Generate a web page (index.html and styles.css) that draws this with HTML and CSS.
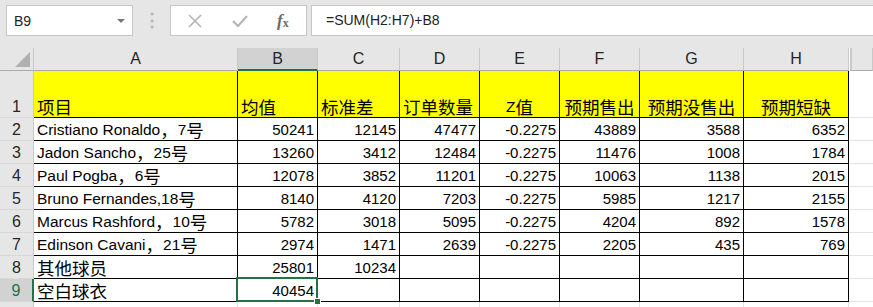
FILE: index.html
```html
<!DOCTYPE html>
<html>
<head>
	<meta charset="utf-8">
	<title>Sheet</title>
	<link rel="stylesheet" href="styles.css">
</head>
<body>
	<div class="toolbar">
		<div class="namebox">
			<span>B9</span>
			<span class="drop"></span>
		</div>
		<div class="grip">⋮</div>
		<div class="btns">
			<svg class="ico" width="16" height="16" viewBox="0 0 16 16"><path d="M2 2 L14 14 M14 2 L2 14" stroke="#b4b4b4" stroke-width="1.6" fill="none"/></svg>
			<svg class="ico" width="18" height="16" viewBox="0 0 18 16"><path d="M2 8 L7 13 L16 3" stroke="#b4b4b4" stroke-width="2" fill="none"/></svg>
			<span class="fx"><i>f</i><sub>x</sub></span>
		</div>
		<div class="formula">=SUM(H2:H7)+B8</div>
	</div>

	<div class="sheet">
		<!-- column headers -->
		<div class="corner"><span class="tri"></span></div>
		<div class="ch">A</div>
		<div class="ch sel">B</div>
		<div class="ch">C</div>
		<div class="ch">D</div>
		<div class="ch">E</div>
		<div class="ch">F</div>
		<div class="ch">G</div>
		<div class="ch">H</div>
		<div class="ch end"></div>

		<!-- row 1 -->
		<div class="rh tall">1</div>
		<div class="c y"><span class="zh">项目</span></div>
		<div class="c y"><span class="zh">均值</span></div>
		<div class="c y"><span class="zh">标准差</span></div>
		<div class="c y"><span class="zh">订单数量</span></div>
		<div class="c y m">Z<span class="zh">值</span></div>
		<div class="c y m"><span class="zh">预期售出</span></div>
		<div class="c y m"><span class="zh">预期没售出</span></div>
		<div class="c y m"><span class="zh">预期短缺</span></div>
		<div class="e"></div>

		<div class="rh">2</div>
		<div class="c">Cristiano Ronaldo<span class="zh">，</span>7<span class="zh">号</span></div>
		<div class="c n">50241</div>
		<div class="c n">12145</div>
		<div class="c n">47477</div>
		<div class="c n">-0.2275</div>
		<div class="c n">43889</div>
		<div class="c n">3588</div>
		<div class="c n">6352</div>
		<div class="e"></div>

		<div class="rh">3</div>
		<div class="c">Jadon Sancho<span class="zh">，</span>25<span class="zh">号</span></div>
		<div class="c n">13260</div>
		<div class="c n">3412</div>
		<div class="c n">12484</div>
		<div class="c n">-0.2275</div>
		<div class="c n">11476</div>
		<div class="c n">1008</div>
		<div class="c n">1784</div>
		<div class="e"></div>

		<div class="rh">4</div>
		<div class="c">Paul Pogba<span class="zh">，</span>6<span class="zh">号</span></div>
		<div class="c n">12078</div>
		<div class="c n">3852</div>
		<div class="c n">11201</div>
		<div class="c n">-0.2275</div>
		<div class="c n">10063</div>
		<div class="c n">1138</div>
		<div class="c n">2015</div>
		<div class="e"></div>

		<div class="rh">5</div>
		<div class="c">Bruno Fernandes,18<span class="zh">号</span></div>
		<div class="c n">8140</div>
		<div class="c n">4120</div>
		<div class="c n">7203</div>
		<div class="c n">-0.2275</div>
		<div class="c n">5985</div>
		<div class="c n">1217</div>
		<div class="c n">2155</div>
		<div class="e"></div>

		<div class="rh">6</div>
		<div class="c">Marcus Rashford<span class="zh">，</span>10<span class="zh">号</span></div>
		<div class="c n">5782</div>
		<div class="c n">3018</div>
		<div class="c n">5095</div>
		<div class="c n">-0.2275</div>
		<div class="c n">4204</div>
		<div class="c n">892</div>
		<div class="c n">1578</div>
		<div class="e"></div>

		<div class="rh">7</div>
		<div class="c">Edinson Cavani<span class="zh">，</span>21<span class="zh">号</span></div>
		<div class="c n">2974</div>
		<div class="c n">1471</div>
		<div class="c n">2639</div>
		<div class="c n">-0.2275</div>
		<div class="c n">2205</div>
		<div class="c n">435</div>
		<div class="c n">769</div>
		<div class="e"></div>

		<div class="rh">8</div>
		<div class="c"><span class="zh">其他球员</span></div>
		<div class="c n">25801</div>
		<div class="c n">10234</div>
		<div class="c"></div>
		<div class="c"></div>
		<div class="c"></div>
		<div class="c"></div>
		<div class="c"></div>
		<div class="e"></div>

		<div class="rh sel">9</div>
		<div class="c"><span class="zh">空白球衣</span></div>
		<div class="c n active">40454<span class="handle"></span></div>
		<div class="c"></div>
		<div class="c"></div>
		<div class="c"></div>
		<div class="c"></div>
		<div class="c"></div>
		<div class="c"></div>
		<div class="e"></div>

		<!-- row 10, only its top edge shows -->
		<div class="rh"></div>
		<div class="g"></div>
		<div class="g"></div>
		<div class="g"></div>
		<div class="g"></div>
		<div class="g"></div>
		<div class="g"></div>
		<div class="g"></div>
		<div class="g"></div>
		<div class="e"></div>
	</div>
</body>
</html>
```

FILE: styles.css
```css
html, body {
	margin: 0;
	background: #fff;
	overflow: hidden;
}
body {
	width: 873px;
	height: 307px;
	font-family: "Liberation Sans", "Noto Sans CJK SC", sans-serif;
	color: #000;
}
.toolbar {
	height: 48px;
	background: #e6e6e6;
	display: flex;
	align-items: flex-start;
	padding-top: 5px;
	box-sizing: border-box;
}
.namebox {
	margin-left: 6px;
	width: 127px;
	height: 31px;
	box-sizing: border-box;
	background: #fff;
	border: 1px solid #c6c6c6;
	display: flex;
	align-items: center;
	justify-content: space-between;
	padding: 0 7px 0 7px;
	font-size: 14px;
	color: #222;
}
.drop {
	width: 0;
	height: 0;
	border-left: 4px solid transparent;
	border-right: 4px solid transparent;
	border-top: 4px solid #777;
}
.grip {
	width: 37px;
	text-align: center;
	color: #b5b5b5;
	font-size: 18px;
	line-height: 31px;
	font-weight: bold;
}
.btns {
	width: 137px;
	height: 31px;
	box-sizing: border-box;
	background: #fff;
	border: 1px solid #c6c6c6;
	display: flex;
	align-items: center;
	padding-left: 16px;
	gap: 28px;
}
.fx {
	font-family: "Liberation Serif", serif;
	font-size: 17px;
	color: #6a6a6a;
	font-weight: bold;
}
.fx sub {
	font-size: 12px;
	vertical-align: -1px;
}
.formula {
	margin-left: 4px;
	flex: 1;
	height: 31px;
	box-sizing: border-box;
	background: #fff;
	border: 1px solid #c6c6c6;
	border-right: none;
	padding-left: 14px;
	font-size: 14px;
	line-height: 29px;
	color: #222;
}

.sheet {
	display: grid;
	grid-template-columns: 34px 204px 80px 82px 80px 80px 80px 104px 105px 1fr;
	grid-template-rows: 23px 47px repeat(9, 23px);
	font-size: 15px;
}
.sheet > div {
	box-sizing: border-box;
	overflow: hidden;
	white-space: nowrap;
}
.corner {
	background: #e6e6e6;
	border-right: 1px solid #c8c8c8;
	border-bottom: 1px solid #ababab;
	position: relative;
}
.tri {
	position: absolute;
	right: 3px;
	bottom: 3px;
	width: 0;
	height: 0;
	border-left: 15px solid transparent;
	border-bottom: 15px solid #b0b0b0;
}
.ch {
	background: #e6e6e6;
	border-right: 1px solid #c8c8c8;
	border-bottom: 1px solid #ababab;
	text-align: center;
	line-height: 22px;
	color: #262626;
	font-size: 16px;
}
.ch.sel {
	background: #d2d2d2;
	border-bottom: 2px solid #217346;
	line-height: 21px;
}
.ch.end {
	border-left: 2px solid #c8c8c8;
	margin-left: 1px;
}
.rh {
	background: #e6e6e6;
	border-right: 1px solid #c8c8c8;
	border-bottom: 1px solid #d8d8d8;
	display: flex;
	align-items: flex-end;
	justify-content: center;
	color: #262626;
	font-size: 16px;
	line-height: 21px;
}
.rh.sel {
	background: #d2d2d2;
	border-right: 2px solid #217346;
	color: #217346;
}
.c {
	border-right: 1px solid #000;
	border-bottom: 1px solid #000;
	display: flex;
	align-items: flex-end;
	padding: 0 3px 0 3px;
	line-height: 21px;
	font-size: 15.5px;
}
.zh {
	font-family: "Noto Sans CJK SC", sans-serif;
	font-size: 17.5px;
	line-height: 21px;
}
.y {
	background: #ffff00;
}
.n {
	justify-content: flex-end;
	font-size: 15px;
}
.m {
	justify-content: center;
}
.e {
	border-bottom: 1px solid #e2e2e2;
}
.g {
	border-right: 1px solid #e2e2e2;
}
.active {
	position: relative;
	overflow: visible !important;
}
.active::before {
	content: "";
	position: absolute;
	left: -2px;
	top: -2px;
	right: -1px;
	bottom: -1px;
	border: 2px solid #217346;
}
.handle {
	position: absolute;
	right: -4px;
	bottom: -4px;
	width: 5px;
	height: 5px;
	background: #217346;
	border: 1px solid #fff;
	z-index: 2;
}
```
